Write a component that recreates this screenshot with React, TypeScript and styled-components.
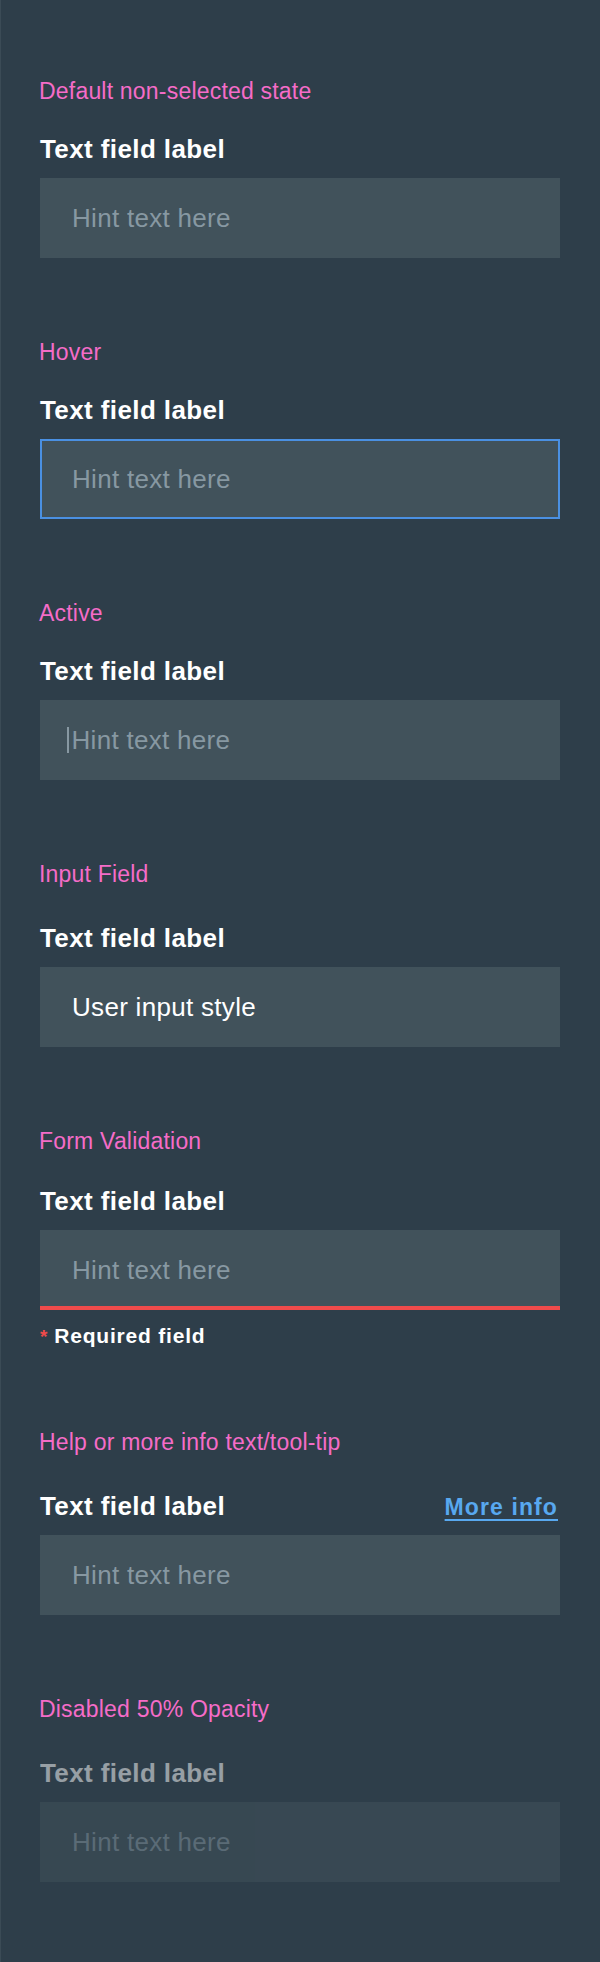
import React, { FunctionComponent } from 'react';
import styled, { createGlobalStyle, css } from 'styled-components';

const GlobalStyle = createGlobalStyle`
    html, body {
        margin: 0;
        padding: 0;
        background-color: #2e3e4a;
    }
    body {
        font-family: "Liberation Sans", Arial, Helvetica, sans-serif;
    }
`;

const Page = styled.div`
    box-sizing: border-box;
    width: 600px;
    height: 1962px;
    padding: 78px 40px 80px 39px;
    background-color: #2e3e4a;
    border-left: 1px solid #3b4b56;
    display: flex;
    flex-direction: column;
    gap: 81px;
    overflow: hidden;
`;

const Section = styled.section`
    display: flex;
    flex-direction: column;
`;

const StateTitle = styled.div<{ $gap: number }>`
    font-size: 23px;
    line-height: 26px;
    letter-spacing: 0.2px;
    color: #f56cc8;
    margin: 0 0 ${p => p.$gap}px -1px;
`;

const LabelRow = styled.div<{ $disabled?: boolean }>`
    height: 30px;
    display: flex;
    justify-content: space-between;
    align-items: baseline;
    margin-bottom: 14px;
    opacity: ${p => (p.$disabled ? 0.5 : 1)};
`;

const Label = styled.label`
    font-size: 26px;
    line-height: 30px;
    font-weight: 700;
    letter-spacing: 0.4px;
    color: #ffffff;
`;

const MoreInfo = styled.a`
    font-size: 23px;
    line-height: 28px;
    font-weight: 700;
    letter-spacing: 1.1px;
    color: #58a8ef;
    text-decoration: underline;
    text-decoration-thickness: 2px;
    text-underline-offset: 4px;
    margin-right: 2px;
    cursor: pointer;
`;

type FieldState = 'default' | 'hover' | 'active' | 'filled' | 'error' | 'disabled';

const Field = styled.div<{ $state: FieldState }>`
    box-sizing: border-box;
    height: 80px;
    width: 520px;
    display: flex;
    align-items: center;
    padding: 0 32px;
    background-color: #41525b;
    font-size: 26px;
    line-height: 30px;
    letter-spacing: 0.3px;
    color: #8798a2;

    ${p => p.$state === 'hover' && css`
        border: 2px solid #4a90e2;
        padding-left: 30px;
    `}
    ${p => p.$state === 'filled' && css`
        color: #ffffff;
    `}
    ${p => p.$state === 'error' && css`
        border-bottom: 4px solid #f04b4b;
        padding-top: 4px;
    `}
    ${p => p.$state === 'disabled' && css`
        opacity: 0.5;
    `}
`;

const Cursor = styled.span`
    display: inline-block;
    width: 1.5px;
    height: 26px;
    background-color: #8798a2;
    margin: 0 3px 0 -5px;
`;

const ErrorText = styled.div`
    height: 24px;
    margin-top: 14px;
    font-size: 21px;
    line-height: 24px;
    font-weight: 700;
    letter-spacing: 0.8px;
    color: #ffffff;

    span {
        color: #f04b4b;
        font-size: 19px;
        line-height: 1;
        margin-right: 6px;
    }
`;

type Props = {
    title: string;
    titleGap: number;
    state: FieldState;
    moreInfo?: boolean;
};

const TextFieldDemo: FunctionComponent<Props> = ({ title, titleGap, state, moreInfo }) => (
    <Section>
        <StateTitle $gap={titleGap}>{title}</StateTitle>
        <LabelRow $disabled={state === 'disabled'}>
            <Label>Text field label</Label>
            {moreInfo && <MoreInfo>More info</MoreInfo>}
        </LabelRow>
        <Field $state={state}>
            {state === 'active' && <Cursor />}
            {state === 'filled' ? 'User input style' : 'Hint text here'}
        </Field>
        {state === 'error' && (
            <ErrorText><span>*</span>Required field</ErrorText>
        )}
    </Section>
);

export default function App() {
    return (
        <>
            <GlobalStyle />
            <Page>
                <TextFieldDemo title="Default non-selected state" titleGap={30} state="default" />
                <TextFieldDemo title="Hover" titleGap={30} state="hover" />
                <TextFieldDemo title="Active" titleGap={30} state="active" />
                <TextFieldDemo title="Input Field" titleGap={36} state="filled" />
                <TextFieldDemo title="Form Validation" titleGap={32} state="error" />
                <TextFieldDemo title="Help or more info text/tool-tip" titleGap={36} state="default" moreInfo />
                <TextFieldDemo title="Disabled 50% Opacity" titleGap={36} state="disabled" />
            </Page>
        </>
    );
}
